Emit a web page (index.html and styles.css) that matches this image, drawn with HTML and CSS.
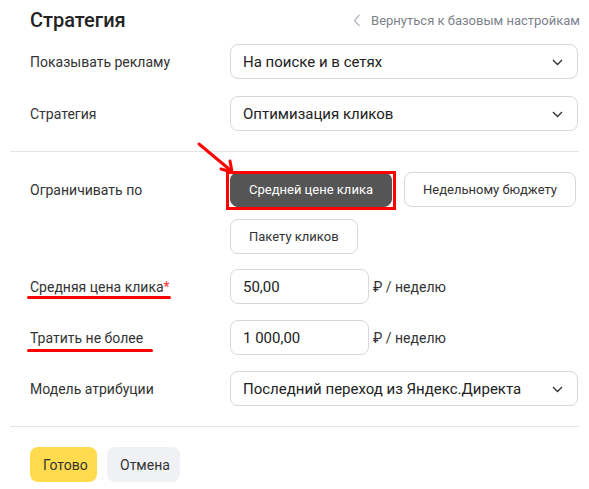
FILE: index.html
```html
<!DOCTYPE html>
<html lang="ru">
<head>
<meta charset="utf-8">
<link rel="stylesheet" href="styles.css">
</head>
<body>
<div class="page">
  <div class="head">
    <h1 class="title">Стратегия</h1>
    <a class="back"><svg class="back-ico" width="8" height="13" viewBox="0 0 8 13"><path d="M6.5 1 1.5 6.5 6.5 12" fill="none" stroke="#b3b7bf" stroke-width="1.3"/></svg>Вернуться к базовым настройкам</a>
  </div>

  <div class="rows rows-main">
    <div class="row">
      <div class="label">Показывать рекламу</div>
      <div class="select"><span>На поиске и в сетях</span><svg class="chev" width="11" height="7" viewBox="0 0 11 7"><path d="M1 1l4.5 4.5L10 1" fill="none" stroke="#333" stroke-width="1.4"/></svg></div>
    </div>
    <div class="row">
      <div class="label">Стратегия</div>
      <div class="select"><span>Оптимизация кликов</span><svg class="chev" width="11" height="7" viewBox="0 0 11 7"><path d="M1 1l4.5 4.5L10 1" fill="none" stroke="#333" stroke-width="1.4"/></svg></div>
    </div>
  </div>

  <hr class="divider">

  <div class="rows rows-limit">
    <div class="row row-top">
      <div class="label label-btn">Ограничивать по</div>
      <div class="choices">
        <div class="arrow"><svg width="44" height="36" viewBox="0 0 44 36"><path d="M3 3 33 28" stroke="#f00" stroke-width="3" stroke-linecap="round"/><path d="M25 28 36 31 34 20" fill="none" stroke="#f00" stroke-width="3" stroke-linecap="round" stroke-linejoin="round"/></svg></div>
        <button class="chip chip-on">Средней цене клика</button>
        <button class="chip">Недельному бюджету</button>
        <button class="chip">Пакету кликов</button>
      </div>
    </div>
    <div class="row row-first">
      <div class="label"><span class="mark mark-a">Средняя цена клика<span class="req">*</span></span></div>
      <div class="field"><div class="input">50,00</div><span class="unit">₽ / неделю</span></div>
    </div>
    <div class="row">
      <div class="label"><span class="mark mark-b">Тратить не более</span></div>
      <div class="field"><div class="input">1 000,00</div><span class="unit">₽ / неделю</span></div>
    </div>
    <div class="row">
      <div class="label">Модель атрибуции</div>
      <div class="select"><span>Последний переход из Яндекс.Директа</span><svg class="chev" width="11" height="7" viewBox="0 0 11 7"><path d="M1 1l4.5 4.5L10 1" fill="none" stroke="#333" stroke-width="1.4"/></svg></div>
    </div>
  </div>

  <hr class="divider">

  <div class="actions">
    <button class="btn btn-yes">Готово</button>
    <button class="btn btn-no">Отмена</button>
  </div>
</div>
</body>
</html>
```

FILE: styles.css
```css
* { box-sizing: border-box; }
body {
  margin: 0;
  background: #fff;
  font-family: Roboto, "Noto Sans", sans-serif;
  color: #333;
  font-size: 15px;
}
.page {
  padding: 8px 10px 0 10px;
  width: 589px;
}
.head {
  display: flex;
  justify-content: space-between;
  align-items: center;
  height: 24px;
  padding-left: 20px;
}
.title {
  margin: 0;
  font-size: 20px;
  font-weight: 500;
  color: #222;
  line-height: 24px;
}
.back {
  display: flex;
  align-items: center;
  gap: 10px;
  font-size: 13px;
  color: #7c818b;
  margin-right: -1px;
}
.rows {
  display: flex;
  flex-direction: column;
  padding-left: 20px;
}
.rows-main { margin-top: 12px; gap: 17px; }
.rows-limit { gap: 16px; }
.row {
  display: grid;
  grid-template-columns: 200px 348px;
  align-items: center;
}
.row-top { align-items: start; }
.row-first { margin-top: -1px; }
.label { color: #333; font-size: 14px; line-height: 20px; }
.label-btn { padding-top: 8px; }
.select {
  height: 35px;
  border: 1px solid #d5d8de;
  border-radius: 8px;
  display: flex;
  align-items: center;
  justify-content: space-between;
  padding: 0 14px 0 12px;
  color: #222;
}
.chev { margin-top: 1px; }
.divider {
  border: 0;
  border-top: 1px solid #e3e4e7;
  margin: 20px 0 20px 0;
  height: 0;
}
.choices {
  position: relative;
  display: flex;
  flex-wrap: wrap;
  gap: 12px;
}
.arrow {
  position: absolute;
  left: -34px;
  top: -31px;
}
.chip {
  height: 35px;
  padding: 0 18px;
  border: 1px solid #d5d8de;
  border-radius: 8px;
  background: #fff;
  font-family: inherit;
  font-size: 13px;
  color: #333;
  position: relative;
  white-space: nowrap;
}
.chip-on {
  background: #555;
  color: #fff;
  border-color: #555;
}
.chip-on::after {
  content: "";
  position: absolute;
  left: -5px;
  right: -5px;
  top: -2px;
  bottom: -4px;
  border: 3px solid #f00;
}
.field {
  display: flex;
  align-items: center;
  gap: 4px;
}
.input {
  width: 139px;
  height: 35px;
  border: 1px solid #d5d8de;
  border-radius: 8px;
  display: flex;
  align-items: center;
  padding: 0 12px;
  color: #222;
}
.unit { color: #333; font-size: 14px; }
.mark { position: relative; display: inline-block; }
.req { color: #f33; }
.mark::after {
  content: "";
  position: absolute;
  left: -3px;
  height: 3px;
  background: #f00;
  border-radius: 2px;
}
.mark-a::after { right: -1px; top: 19px; }
.mark-b::after { right: -10px; top: 21px; }
.actions {
  display: flex;
  gap: 10px;
  padding-left: 20px;
}
.btn {
  height: 35px;
  border: 0;
  border-radius: 8px;
  font-family: inherit;
  font-size: 14px;
  color: #333;
  padding: 0 13px;
}
.btn-yes { background: #ffdb4d; width: 67px; }
.btn-no { background: #eff1f5; width: 73px; }
```
